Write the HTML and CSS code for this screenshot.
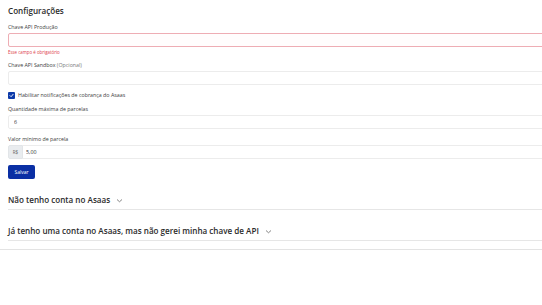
FILE: index.html
```html
<!DOCTYPE html>
<html lang="pt-BR">
<head>
    <meta charset="UTF-8">
    <meta name="viewport" content="width=device-width, initial-scale=1.0">
    <title>Configurações</title>
    <link rel="stylesheet" href="styles.css">
</head>
<body>
    <section class="settings">
        <h2 class="title">Configurações</h2>
        <form class="form">
            <div class="field field-error">
                <label class="label">Chave API Produção</label>
                <input class="input invalid" type="text">
                <div class="error">Esse campo é obrigatório</div>
            </div>
            <div class="field">
                <label class="label">Chave API Sandbox <span class="muted">(Opcional)</span></label>
                <input class="input" type="text">
            </div>
            <div class="field check-row">
                <span class="checkbox">
                    <svg width="5" height="5" viewBox="0 0 10 10"><path d="M2 5.2 L4.2 7.4 L8.2 2.6" fill="none" stroke="#fff" stroke-width="1.8" stroke-linecap="round" stroke-linejoin="round"/></svg>
                </span>
                <span class="check-label">Habilitar notificações de cobrança do Asaas</span>
            </div>
            <div class="field">
                <label class="label">Quantidade máxima de parcelas</label>
                <input class="input" type="text" value="6">
            </div>
            <div class="field">
                <label class="label">Valor mínimo de parcela</label>
                <div class="input-group">
                    <span class="addon">R$</span>
                    <input class="input" type="text" value="5,00">
                </div>
            </div>
            <button class="btn" type="button">Salvar</button>
        </form>

        <div class="accordion">
            <div class="acc-item">
                <span class="acc-title">Não tenho conta no Asaas</span>
                <svg class="chevron" width="7" height="5" viewBox="0 0 14 10"><path d="M2 3 L7 7.5 L12 3" fill="none" stroke="#666" stroke-width="1.6"/></svg>
            </div>
            <div class="acc-item">
                <span class="acc-title">Já tenho uma conta no Asaas, mas não gerei minha chave de API</span>
                <svg class="chevron" width="7" height="5" viewBox="0 0 14 10"><path d="M2 3 L7 7.5 L12 3" fill="none" stroke="#666" stroke-width="1.6"/></svg>
            </div>
        </div>
    </section>
</body>
</html>
```

FILE: styles.css
```css
* {
    margin: 0;
    padding: 0;
    box-sizing: border-box;
}
body {
    background: #fff;
    color: #333;
    font-family: "Open Sans", "Noto Sans", sans-serif;
    overflow: hidden;
}
.settings {
    width: 600px;
    padding: 0 0 8px 8px;
    border-bottom: 1px solid #e3e3e3;
}
.title {
    font-size: 8.1px;
    line-height: 14px;
    font-weight: 600;
    color: #2b2b2b;
    margin-top: 4px;
    margin-bottom: 5px;
}
.field {
    margin-bottom: 6px;
}
.field-error {
    margin-bottom: 5px;
}
.label {
    display: block;
    font-size: 5.3px;
    line-height: 8px;
    color: #3c3c3c;
    margin-bottom: 2px;
}
.muted {
    color: #777;
}
.input {
    display: block;
    width: 100%;
    height: 14px;
    border: 1px solid #ececec;
    border-radius: 2px;
    background: #fff;
    font-family: inherit;
    font-size: 5.3px;
    color: #333;
    padding: 0 5px;
    outline: none;
}
.input.invalid {
    border-color: #eeadb4;
    background: #fffdfd;
}
.error {
    font-size: 4.4px;
    line-height: 7px;
    margin-top: 2px;
    color: #dc3b4a;
}
.check-row {
    display: flex;
    align-items: center;
    gap: 3px;
    height: 8px;
}
.checkbox {
    width: 7px;
    height: 7px;
    border-radius: 1px;
    background: #0d3aa9;
    display: flex;
    align-items: center;
    justify-content: center;
}
.check-label {
    font-size: 5.3px;
    color: #3c3c3c;
}
.input-group {
    display: flex;
    height: 14px;
}
.addon {
    width: 15px;
    flex-shrink: 0;
    background: #e9ecef;
    border: 1px solid #e2e5e8;
    border-radius: 2px 0 0 2px;
    font-size: 4.6px;
    color: #666;
    display: flex;
    align-items: center;
    justify-content: center;
}
.input-group .input {
    flex: 1;
    border-left: none;
    border-radius: 0 2px 2px 0;
    padding: 0 3px;
}
.btn {
    display: block;
    width: 27px;
    height: 14px;
    border: none;
    border-radius: 2px;
    background: #0a2fa4;
    color: #fff;
    font-family: inherit;
    font-size: 5px;
    cursor: pointer;
}
.acc-item {
    display: flex;
    align-items: center;
    gap: 6px;
    padding-top: 15px;
    padding-bottom: 3px;
    border-bottom: 1px solid #e6e6e6;
}
.acc-title {
    font-size: 8.1px;
    line-height: 12px;
    font-weight: 600;
    color: #2b2b2b;
}
.chevron {
    margin-top: 1px;
}
```
